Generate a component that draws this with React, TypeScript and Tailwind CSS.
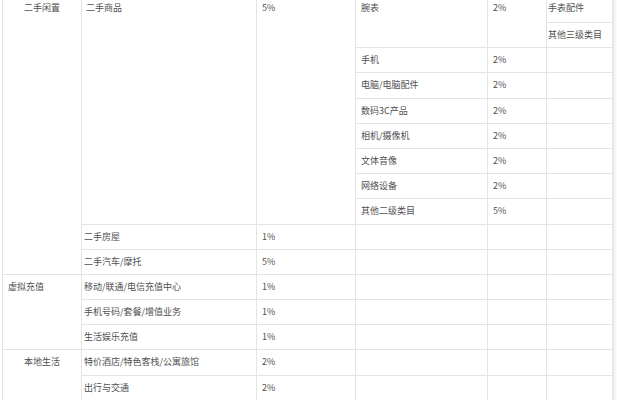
const cell = "border border-[#e4e4e4] align-top leading-[24px] p-0 whitespace-nowrap";

type Row = { sub?: string; rate?: string; third?: string };

const phoneRows: Row[] = [
  { sub: "手机", rate: "2%" },
  { sub: "电脑/电脑配件", rate: "2%" },
  { sub: "数码3C产品", rate: "2%" },
  { sub: "相机/摄像机", rate: "2%" },
  { sub: "文体音像", rate: "2%" },
  { sub: "网络设备", rate: "2%" },
  { sub: "其他二级类目", rate: "5%" },
];

function Blank() {
  return (
    <>
      <td className={cell}></td>
      <td className={cell}></td>
      <td className={cell}></td>
    </>
  );
}

export default function App() {
  return (
    <div className="w-[617px] h-[400px] overflow-hidden bg-white flex">
      <div className="-mt-[5px] ml-[2px]">
        <table
          className="table-fixed border-collapse w-[610px] text-[9px] text-[#4f4f4f]"
          style={{ fontFamily: '"Noto Sans CJK SC", "Noto Sans", sans-serif' }}
        >
          <colgroup>
            <col className="w-[79px]" />
            <col className="w-[175px]" />
            <col className="w-[99px]" />
            <col className="w-[132px]" />
            <col className="w-[59px]" />
            <col className="w-[66px]" />
          </colgroup>
          <tbody>
            <tr className="h-[27px]">
              <td rowSpan={11} className={`${cell} text-center`}>二手闲置</td>
              <td rowSpan={9} className={`${cell} pl-[4px]`}>二手商品</td>
              <td rowSpan={9} className={`${cell} pl-[5px]`}>5%</td>
              <td rowSpan={2} className={`${cell} pl-[5px]`}>腕表</td>
              <td rowSpan={2} className={`${cell} pl-[5px]`}>2%</td>
              <td className={`${cell} pl-[1px]`}>手表配件</td>
            </tr>
            <tr className="h-[25.2px]">
              <td className={`${cell} pl-[1px]`}>其他三级类目</td>
            </tr>
            {phoneRows.map((r) => (
              <tr key={r.sub} className="h-[25.2px]">
                <td className={`${cell} pl-[5px]`}>{r.sub}</td>
                <td className={`${cell} pl-[5px]`}>{r.rate}</td>
                <td className={cell}></td>
              </tr>
            ))}
            <tr className="h-[25.2px]">
              <td className={`${cell} pl-[2px]`}>二手房屋</td>
              <td className={`${cell} pl-[5px]`}>1%</td>
              <Blank />
            </tr>
            <tr className="h-[25.2px]">
              <td className={`${cell} pl-[2px]`}>二手汽车/摩托</td>
              <td className={`${cell} pl-[5px]`}>5%</td>
              <Blank />
            </tr>
            <tr className="h-[25.2px]">
              <td rowSpan={3} className={`${cell} pl-[5px]`}>虚拟充值</td>
              <td className={`${cell} pl-[2px]`}>移动/联通/电信充值中心</td>
              <td className={`${cell} pl-[5px]`}>1%</td>
              <Blank />
            </tr>
            <tr className="h-[25.2px]">
              <td className={`${cell} pl-[2px]`}>手机号码/套餐/增值业务</td>
              <td className={`${cell} pl-[5px]`}>1%</td>
              <Blank />
            </tr>
            <tr className="h-[25.2px]">
              <td className={`${cell} pl-[2px]`}>生活娱乐充值</td>
              <td className={`${cell} pl-[5px]`}>1%</td>
              <Blank />
            </tr>
            <tr className="h-[25.2px]">
              <td rowSpan={3} className={`${cell} text-center`}>本地生活</td>
              <td className={`${cell} pl-[2px]`}>特价酒店/特色客栈/公寓旅馆</td>
              <td className={`${cell} pl-[5px]`}>2%</td>
              <Blank />
            </tr>
            <tr className="h-[25.2px]">
              <td className={`${cell} pl-[2px]`}>出行与交通</td>
              <td className={`${cell} pl-[5px]`}>2%</td>
              <Blank />
            </tr>
            <tr className="h-[25.2px]">
              <td className={`${cell} pl-[2px]`}></td>
              <td className={cell}></td>
              <Blank />
            </tr>
          </tbody>
        </table>
      </div>
      <div className="w-[4px] h-full bg-gradient-to-r from-[#e8e8e8] to-white"></div>
    </div>
  );
}
